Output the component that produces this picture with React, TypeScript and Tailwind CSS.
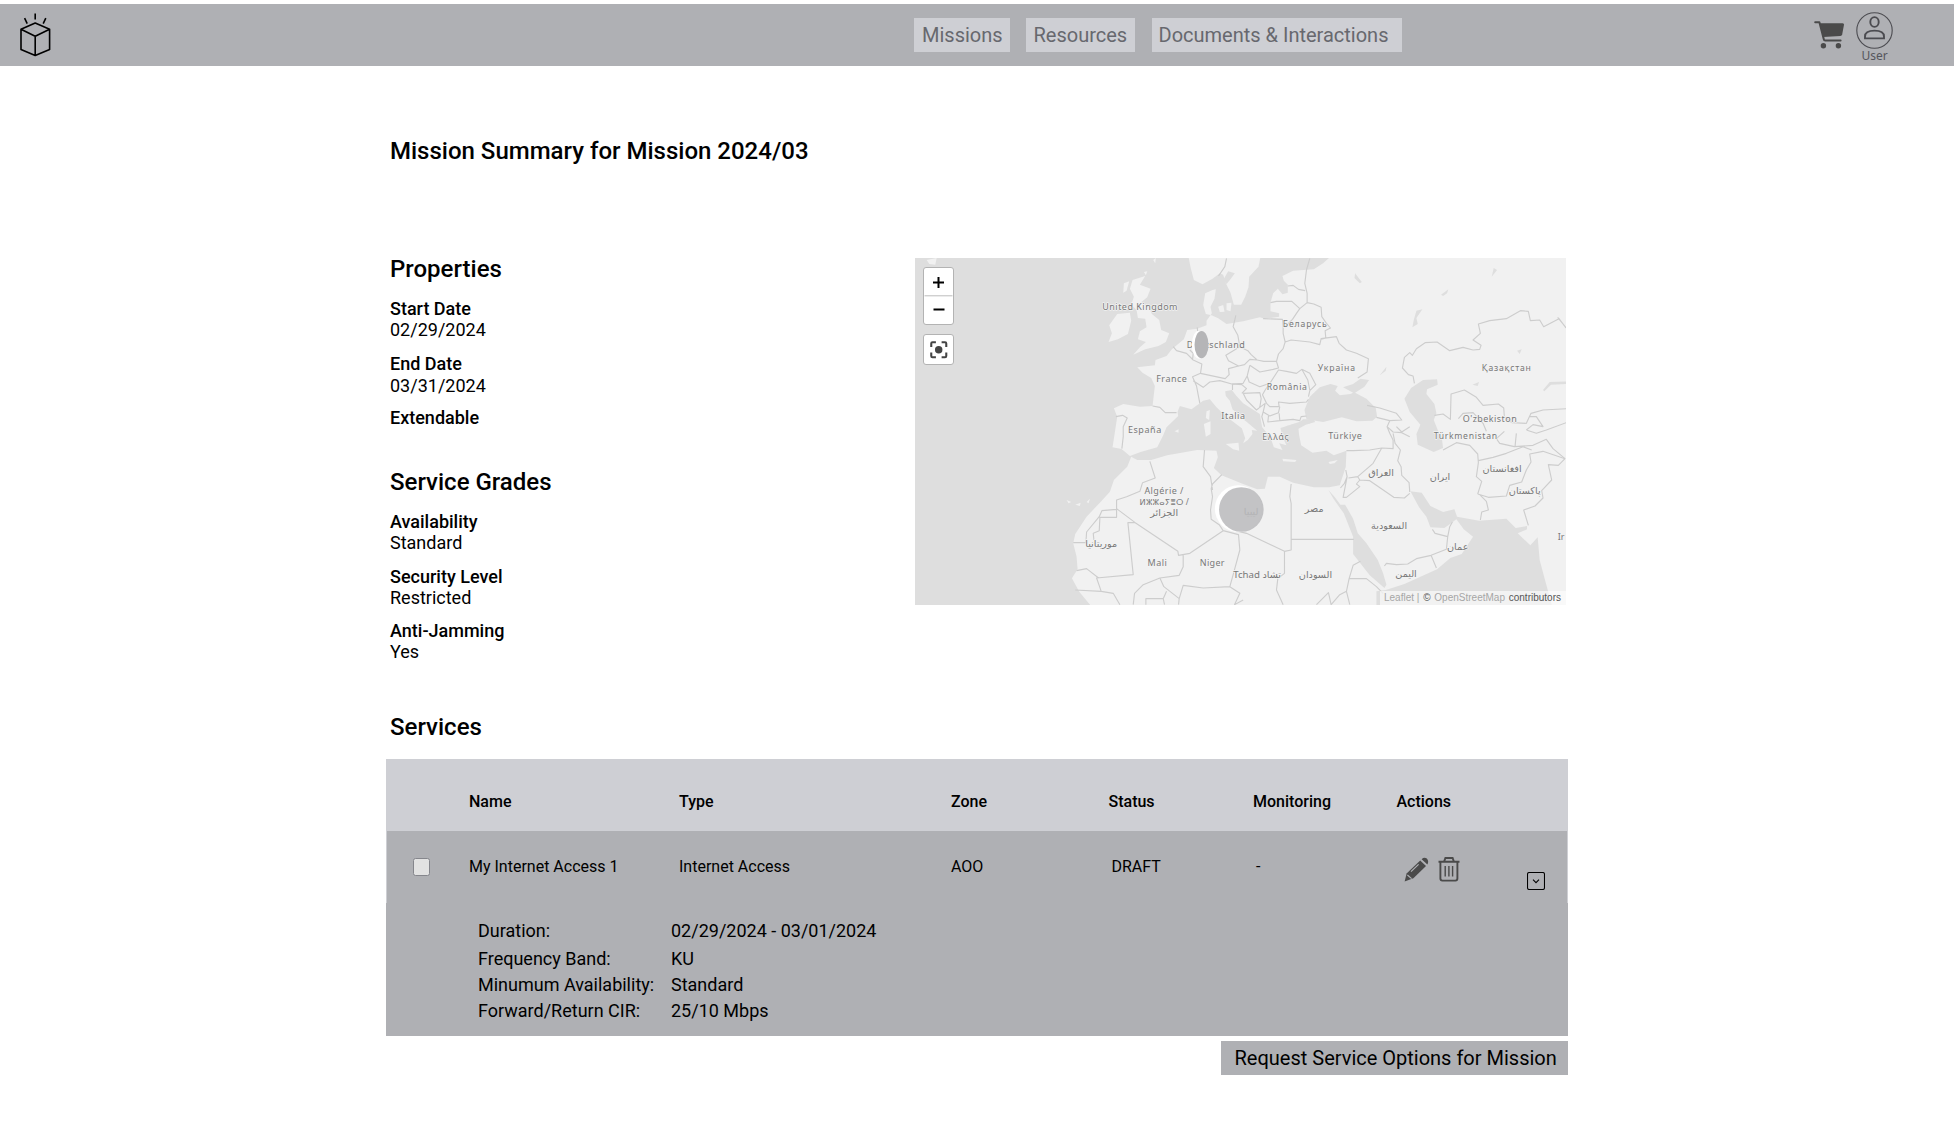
import React from "react";

const NAV = [
  { label: "Missions", cls: "w-[96px] pl-[8px]" },
  { label: "Resources", cls: "w-[109px] pl-[7.5px] ml-[16px]" },
  { label: "Documents & Interactions", cls: "w-[250px] pl-[6.5px] ml-[17px]" },
];

function Logo() {
  return (
    <svg className="ml-[16px] mt-[6px] h-[50px] w-[38px] shrink-0" viewBox="16 10 38 50" fill="none" stroke="#000" strokeWidth="1.6" strokeLinejoin="round">
      <path d="M35.2 23 49.6 29.3V49.4L35.2 55.4 21 49.4V29.3Z M21 29.3 35.2 36.3 49.6 29.3 M35.2 36.3V55.4" />
      <path d="M35.2 13.5V19.5M24.6 18.2 27.2 23.6M45.8 18.2 43.2 23.6" />
    </svg>
  );
}

function Header() {
  return (
    <header className="mt-1 flex h-[62px] bg-[#afb0b4]">
      <Logo />
      <nav className="ml-[860px] mt-[14px] flex h-[34px] text-[20px] leading-[34px] text-[#67686e]">
        {NAV.map((n) => (
          <a key={n.label} className={`h-full whitespace-nowrap bg-[#cecfd4] ${n.cls}`}>{n.label}</a>
        ))}
      </nav>
      <div className="ml-auto mr-[61px] flex">
        <svg className="mr-[11px] mt-[16px] h-[30px] w-[31px]" viewBox="0 0 31 30" fill="#4a4a4a">
          <path d="M1.2 2.2H5.4L9.8 19.3Q10 20.6 11.3 20.6H26.6" fill="none" stroke="#4a4a4a" strokeWidth="2" strokeLinecap="round" strokeLinejoin="round" />
          <path d="M6 3.2H28.6Q30.2 3.2 30 4.8L28.2 14.5Q27.9 15.9 26.4 16L9.2 17Z" />
          <circle cx="9.4" cy="25.8" r="2.7" />
          <circle cx="24.4" cy="25.8" r="2.7" />
        </svg>
        <div className="flex w-[37px] flex-col items-center">
          <svg className="mt-[8px] h-[37px] w-[37px] shrink-0" viewBox="0 0 37 37" fill="none" stroke="#4b4b50">
            <circle cx="18.5" cy="18.5" r="17.7" strokeWidth="1.1" />
            <ellipse cx="18.5" cy="10" rx="4.2" ry="4.9" strokeWidth="1.9" />
            <path d="M9 26.4V24.4Q9 18.6 18.5 18.6T28 24.4V26.4Z" strokeWidth="1.9" />
          </svg>
          <span className="font-['Noto_Sans'] text-[12px] leading-[14px] text-[#55565c]">User</span>
        </div>
      </div>
    </header>
  );
}

function Field({ name, value, cls }: { name: string; value?: string; cls: string }) {
  return (
    <div className={`flex flex-col text-[18px] leading-[21px] ${cls}`}>
      <dt className="font-medium">{name}</dt>
      {value && <dd>{value}</dd>}
    </div>
  );
}

/* Label: text, x centre, baseline, width (0 keeps the natural width), font size */
const LABELS: [string, number, number, number, number][] = [
  ["United Kingdom", 690, 179, 226, 27],
  ["Deutschland", 918, 294, 174, 27],
  ["France", 785, 397, 92, 27],
  ["Беларусь", 1185, 232, 132, 26],
  ["Україна", 1280, 364, 112, 26],
  ["România", 1131, 420, 121, 26],
  ["Italia", 970, 506, 71, 27],
  ["España", 704, 549, 100, 27],
  ["Ελλάς", 1097, 570, 80, 26],
  ["Türkiye", 1306, 567, 101, 27],
  ["Қазақстан", 1790, 363, 147, 26],
  ["O'zbekiston", 1740, 517, 162, 27],
  ["Türkmenistan", 1667, 567, 190, 26],
  ["Algérie /", 762, 733, 117, 27],
  ["ⵍⵣⵣⴰⵢⴻⵔ /", 763, 766, 148, 25],
  ["الجزائر", 763, 798, 0, 29],
  ["موريتانيا", 574, 892, 0, 29],
  ["Mali", 742, 947, 58, 27],
  ["Niger", 907, 948, 74, 27],
  ["Tchad تشاد", 1042, 983, 0, 29],
  ["السودان", 1217, 983, 0, 29],
  ["مصر", 1213, 787, 0, 29],
  ["السعودية", 1438, 836, 0, 29],
  ["العراق", 1414, 678, 0, 29],
  ["ايران", 1591, 691, 0, 29],
  ["ليبيا", 1024, 796, 0, 29],
  ["افغانستان", 1777, 665, 0, 29],
  ["پاکستان", 1845, 731, 0, 29],
  ["عمان", 1644, 899, 0, 29],
  ["اليمن", 1489, 981, 0, 29],
];

const LAND = [
  // Europe, Asia and Africa
  "M1262 20 1240 40 1212 58 1150 62 1118 78 1122 92 1134 104 1134 128 1118 133 1104 116 1090 130 1082 158 1082 184 1108 190 1108 200 1064 206 1050 202 1000 214 950 222 925 205 905 196 888 192 880 165 886 130 908 120 918 118 914 146 902 170 906 190 890 212 890 226 862 236 832 240 822 268 786 298 770 318 737 330 735 346 682 352 698 368 724 384 735 408 728 468 690 470 640 462 612 475 622 500 608 592 635 597 660 618 692 606 742 592 760 556 770 532 805 498 803 486 810 468 845 478 880 452 900 448 920 472 950 500 996 535 1006 565 1000 580 1014 570 1028 552 1026 540 1042 542 1010 515 990 500 968 478 960 452 948 438 946 424 966 420 980 438 1000 460 1050 492 1057 532 1082 562 1092 592 1118 600 1108 580 1130 586 1118 560 1112 534 1138 526 1162 522 1180 508 1212 508 1216 516 1188 524 1166 536 1168 556 1174 586 1208 608 1250 602 1272 616 1310 602 1308 650 1290 706 1258 712 1212 712 1150 698 1110 680 1074 680 1065 716 1042 718 1000 702 935 676 912 654 924 622 920 602 862 600 772 616 724 630 682 630 664 620 652 650 612 690 600 725 572 756 530 800 496 852 490 880 500 920 503 958 486 985 508 1025 545 1070 1975 1070 1975 20Z",
  // Scandinavia
  "M836 20 842 52 852 90 878 103 908 86 930 70 940 74 948 100 962 128 972 164 994 164 1006 140 1016 112 1018 80 1046 50 1052 20Z",
  // Danish isles
  "M925 170 940 165 944 185 930 186Z M950 160 965 158 962 184 950 180Z",
  // Great Britain
  "M668 90 706 78 690 104 722 116 712 142 692 158 716 170 726 192 748 210 754 240 778 250 768 276 746 288 706 298 670 314 690 292 708 276 684 268 690 244 710 232 706 206 684 204 680 180 664 164 672 140 660 116Z",
  // Ireland and northern isles
  "M598 226 622 192 660 188 664 212 654 252 624 268 596 276 606 250Z M642 100 658 94 650 122 640 128Z M702 66 712 64 708 76Z M730 30 738 24 736 40Z M50 30 80 24 76 44 58 42Z",
  // Mediterranean islands
  "M890 484 900 480 898 510 888 504Z M882 522 902 514 902 552 888 560Z M948 582 986 578 988 602 970 598Z M1118 626 1160 630 1156 636 1120 634Z M1256 636 1284 630 1274 640 1260 642Z M794 544 806 538 806 548Z",
  // Atlantic islands
  "M470 750 484 756 476 760Z M496 764 512 758 510 768Z M530 756 540 746 536 760Z",
];

const SEA = [
  // Black Sea and Sea of Azov
  "M1190 508 1184 480 1200 440 1230 412 1262 402 1284 408 1276 422 1290 436 1322 432 1330 428 1300 412 1330 402 1352 386 1378 390 1364 410 1336 428 1370 446 1398 474 1402 500 1388 512 1340 514 1296 502 1240 516Z",
  // Caspian Sea
  "M1484 446 1504 414 1540 390 1582 388 1584 404 1552 418 1550 432 1574 462 1580 490 1572 510 1584 540 1596 560 1600 594 1572 606 1524 584 1520 552 1532 524 1500 486Z",
  // Red Sea
  "M1256 720 1272 748 1302 790 1330 860 1330 912 1380 976 1424 1014 1430 1004 1420 970 1404 930 1370 880 1344 850 1330 806 1306 764 1292 764 1274 740Z",
  // Gulf and Arabian Sea
  "M1502 724 1536 728 1562 768 1600 786 1634 778 1642 800 1708 812 1790 806 1818 834 1852 828 1852 838 1824 850 1862 886 1884 862 1890 930 1906 990 1928 1070 1400 1070 1400 1024 1428 1020 1484 1002 1582 958 1622 924 1656 912 1690 860 1662 838 1640 808 1624 820 1604 834 1562 832 1550 800 1528 772Z",
  // Lakes
  "M1520 182 1538 178 1520 204 1524 222 1508 232 1512 210Z M1336 70 1356 96 1350 100 1334 84Z M1594 134 1616 118 1612 130 1600 138Z M1900 420 1920 396 1975 394 1975 402 1924 404 1904 424Z M1130 528 1200 520 1210 514 1180 512Z M1410 376 1430 350 1428 362Z M1688 404 1708 396 1704 408Z M1822 302 1836 298 1830 312Z M1752 54 1762 60 1746 80Z M940 90 955 64 975 70 962 88 950 102Z",
];

const BORDERS = [
  // Northern and eastern Europe
  "M950 25 945 50 926 78 M1200 25 1190 60 1185 100 1192 130 1192 158 M1134 108 1150 106 1166 118 1186 122 M1082 158 1100 154 1146 154 1170 176 1192 158 1212 162 1234 172 1236 200 1250 220 1262 234 1246 242 1248 264 1232 268 M1170 176 1160 190 1148 208 1128 228 1120 230 1120 250 1126 276 1144 270 1200 276 1230 284 1234 266 1280 260 1288 280 1310 300 1340 310 1376 326 1372 366 1344 384 M1060 206 1118 208 1120 230 M1126 276 1120 296 1106 312 1100 334 M978 196 970 230 984 256 990 290 948 316 956 332 986 348 1004 344 1020 328 1042 330 M990 290 1014 302 1024 314 1042 330 1062 334 1100 334 1106 354 1090 358 1050 366 1020 346",
  // Central and western Europe
  "M862 232 866 262 M790 290 800 302 830 310 850 330 876 342 872 370 848 380 860 408 866 440 870 460 M848 330 850 310 840 300 M728 468 750 472 766 488 800 488 M618 500 638 496 652 504 640 530 640 560 636 596 M872 370 900 376 946 386 958 374 956 356 986 348 M850 392 880 412 900 396 930 392 966 402 1000 400 1012 378 1020 346 M1012 378 1018 396 1050 410 1080 400 1106 360 1130 364 1160 370 1176 358 1200 370 1218 404 1200 422 1196 440 M1176 358 1194 390 1200 420 M1080 400 1066 420 1058 434 1070 460 1080 470 1108 470 1106 456 1140 460 1190 456 1196 448",
  "M968 420 968 402 996 404 1010 416 996 430 M1000 430 1050 428 1054 446 1050 472 1040 480 1010 450 1000 430 M1050 472 1066 460 1060 486 1080 498 1106 488 1110 470 M1060 486 1056 500 1064 530 M1076 498 1074 516 1110 512 1108 490 M1110 512 1150 508 1170 512 1174 500 1190 498",
  // Caucasus and central Asia
  "M1372 466 1410 474 1460 490 1476 510 1440 512 1400 502 M1440 512 1432 530 1450 546 1476 548 1500 560 M1432 530 1440 550 1450 570 M1460 530 1476 546 1500 530 M1514 400 1510 378 1496 374 1478 354 1484 322 1500 308 1508 316 1520 296 1546 278 1582 276 1620 302 1660 292 1690 300 1710 298 1714 286 1690 270 1712 250 1706 222 1740 212 1790 206 1832 182 1856 184 1862 212 1890 210 1902 230 1948 206 1969 234 M1944 202 1975 240",
  "M1574 496 1600 492 1622 508 1624 432 1664 420 1700 442 1720 466 1766 462 1782 474 1784 500 1806 518 M1646 506 1660 490 1690 488 1720 520 1730 544 M1600 600 1640 578 1680 586 1704 612 1706 638 1700 680 1716 694 1704 732 M1784 544 1760 566 1770 580 1814 590 1870 586 1910 568 1930 596 1966 626 M1806 518 1850 520 1864 490 1900 480 1975 476 M1850 540 1870 524 1900 530 1880 500 1860 500 M1850 540 1880 550 1910 540 1975 516 M1820 550 1816 590 M1706 632 1750 622 1790 610 1840 590 1866 600",
  // Middle East
  "M1310 602 1330 602 1380 600 1416 594 1450 596 1450 570 M1416 594 1390 640 1344 680 1316 684 M1344 680 1350 690 1340 702 1350 710 1310 742 1300 742 1312 680 1308 660 M1312 680 1304 700 1292 714 M1350 690 1380 692 1452 742 1484 744 1500 730 M1450 550 1456 580 1472 600 1464 632 1474 650 1476 676 1498 698 1500 726 M1568 838 1576 850 1614 860 1620 830 1628 816 M1614 860 1610 898 1564 916 1580 954 M1564 916 1520 926 1494 942 1460 944 1430 940 1424 948 M1704 732 1736 742 1790 738 1800 706 1836 696 1850 660 1864 636 1860 612 1900 604 1966 626 1946 646 1916 644 1926 690 1896 722 1900 744 1876 768 1842 780 1856 826 M1710 734 1730 754 1736 780 1716 786 1712 810",
  // Africa
  "M720 634 736 684 698 698 690 724 650 740 620 750 620 782 M570 802 568 842 550 850 552 870 M568 802 620 802 620 776 676 818 804 904 806 916 840 910 940 842 928 824 904 808 902 780 908 740 904 716 908 702 936 674 M884 600 880 650 902 680 908 720 M490 878 528 878 530 846 568 800 576 782 620 778 M676 818 654 818 670 974 560 984 574 1024 496 1020 M820 916 820 950 808 976 750 984 700 1004 674 1030 670 1064 M500 962 530 956 566 984 M574 1024 610 1030 630 1064 M750 984 762 1010 808 1046 806 1064 M808 1046 820 1006 880 1014 960 1010 970 974 990 900 986 854 940 842 M708 1064 708 1046 760 1046 770 1024 M760 1046 764 1064 M960 1010 990 1030 974 1064 1000 1050",
  "M1144 702 1140 740 1144 760 1144 868 1332 868 M986 844 1010 850 1124 904 1144 900 1144 868 M1124 904 1124 970 1104 986 1100 1020 1120 1064 M1352 934 1330 946 1318 986 1310 1024 1290 1034 1264 1064 1256 1028 1220 1064 M1318 986 1370 986 1400 1010 1420 1030 M1310 1024 1320 1064",
];

function WorldMap() {
  return (
    <div className="relative h-[347px] w-[651px] overflow-hidden bg-[#dedede]">
      <svg className="block h-full w-full" viewBox="15 24 1954 1041" preserveAspectRatio="none">
        <g fill="#f1f1f1">{LAND.map((d) => <path key={d} d={d} />)}</g>
        <g fill="#dedede">{SEA.map((d) => <path key={d} d={d} />)}</g>
        <g fill="none" stroke="#cdcdcd" strokeWidth="3.4" strokeLinejoin="round">{BORDERS.map((d) => <path key={d} d={d} />)}</g>
        <circle cx="985" cy="776" r="70" fill="#fff" />
        <g fill="#787878" textAnchor="middle" fontFamily="'Noto Sans', 'DejaVu Sans', sans-serif" stroke="#f3f3f3" strokeWidth="4" paintOrder="stroke" strokeLinejoin="round">
          {LABELS.map(([t, x, y, w, s]) => (
            <text key={t} x={x} y={y} fontSize={s} textLength={w || undefined}>{t}</text>
          ))}
          <text x="1944" y="869" fontSize="27" textAnchor="start">Ir</text>
        </g>
        <path d="M867 242A21 42 0 0 0 867 326L885 322 876 246Z" fill="#fff" />
        <ellipse cx="875" cy="284" rx="21" ry="41" fill="#b5b5b7" />
        <circle cx="994.5" cy="778.5" r="67" fill="#bbbbbd" fillOpacity="0.88" />
      </svg>
      <div className="absolute left-[8px] top-[9px] flex w-[31px] flex-col rounded-[3px] border-[1.5px] border-[#b3b3b3] bg-white">
        <svg className="h-[56px] w-full" viewBox="0 0 28 56" fill="none" stroke="#000" strokeWidth="2">
          <path d="M8.5 14.5H19.5M14 9V20M9 41.5H20" />
          <path d="M0 27.8H28" stroke="#bdbdbd" strokeWidth="1" />
        </svg>
      </div>
      <div className="absolute left-[8px] top-[76px] h-[31px] w-[31px] rounded-[3px] border-[1.5px] border-[#b3b3b3] bg-white">
        <svg className="h-full w-full" viewBox="0 0 28 28" fill="none" stroke="#444" strokeWidth="2">
          <path d="M7 11.5V8.2Q7 7 8.2 7H11.5M17 7H20.3Q21.5 7 21.5 8.2V11.5M21.5 17V20.3Q21.5 21.5 20.3 21.5H17M11.5 21.5H8.2Q7 21.5 7 20.3V17" />
          <circle cx="14.2" cy="14.2" r="3.6" fill="#444" stroke="none" />
        </svg>
      </div>
      <div className="absolute bottom-0 right-0 flex h-[14px] w-[186px] items-center justify-between whitespace-nowrap bg-white/60 pl-[4px] pr-[5px] font-['Liberation_Sans'] text-[10px] leading-[14px]">
        <span className="text-[#a6a6a6]">Leaflet |</span>
        <span className="text-[#555]">©</span>
        <span className="text-[#a6a6a6]">OpenStreetMap</span>
        <span className="text-[#555]">contributors</span>
      </div>
    </div>
  );
}

const COLS = "grid grid-cols-[83px_210px_272px_157.5px_144.5px_143.5px_130px_1fr]";

const DETAILS = [
  ["Duration:", "02/29/2024 - 03/01/2024", "h-[28px]"],
  ["Frequency Band:", "KU", "h-[26px]"],
  ["Minumum Availability:", "Standard", "h-[26px]"],
  ["Forward/Return CIR:", "25/10 Mbps", "h-[26px]"],
];

function ServicesTable() {
  return (
    <section className="mt-[18px] w-[1182px]">
      <div className={`${COLS} h-[72px] bg-[#cecfd4] pt-[31px] text-[16px] font-medium leading-[24px]`}>
        <span />
        <span>Name</span>
        <span>Type</span>
        <span>Zone</span>
        <span>Status</span>
        <span>Monitoring</span>
        <span>Actions</span>
      </div>
      <div className="border-x border-[#cecfd4] bg-[#afb0b4]">
        <div className={`${COLS} -mx-px h-[72px] pt-[24px] text-[16px] leading-[24px]`}>
          <span className="ml-[27px] mt-[3px] h-[18px] w-[17px] rounded-[2.5px] border border-[#85868c] bg-[#e2e2e2]" />
          <span>My Internet Access 1</span>
          <span>Internet Access</span>
          <span>AOO</span>
          <span className="pl-[3px]">DRAFT</span>
          <span className="pl-[3px]">-</span>
          <span className="flex pl-[7px] pt-[2px]">
            <svg className="h-[25px] w-[25px]" viewBox="0 0 25 25" fill="#4a4a4a">
              <path d="M16.2 3.6 22 8.9 9.4 21.2 0.6 24.4 2.6 16.4Z" />
              <path d="M17.6 2.2Q20.2-.4 22.8 1.6 25.2 4.2 23.4 7.4Z" />
              <path d="M16.4 2.4 23.2 8.4" stroke="#afb0b4" strokeWidth="0.9" />
              <path d="M7 14.6 14.6 7.4M3.4 18 7.6 21.6" fill="none" stroke="#afb0b4" strokeWidth="1.2" />
            </svg>
            <svg className="ml-[9px] h-[25px] w-[22px]" viewBox="0 0 22 25" fill="none" stroke="#4a4a4a">
              <path d="M0.5 4.8H21.5M6 4.8 7.4 1H14.6L16 4.8" strokeWidth="1.9" />
              <path d="M2.4 5V21.6Q2.4 23.6 4.4 23.6H17.4Q19.4 23.6 19.4 21.6V5" strokeWidth="1.9" />
              <path d="M7.2 9V19.5M10.9 9V19.5M14.6 9V19.5" strokeWidth="1.4" />
            </svg>
          </span>
          <span className="pt-[17px]">
            <svg className="h-[18px] w-[18px]" viewBox="0 0 18 18" fill="none" stroke="#000">
              <rect x="0.5" y="0.5" width="17" height="17" rx="1.8" strokeWidth="1.1" />
              <path d="M6 7.6 9 10.6 12 7.6" strokeWidth="1.1" />
            </svg>
          </span>
        </div>
      </div>
      <dl className="h-[133px] bg-[#afb0b4] pl-[92px] pt-[14px] text-[18px] leading-[28px]">
        {DETAILS.map(([k, v, h]) => (
          <div key={k} className={`flex ${h}`}>
            <dt className="w-[193px]">{k}</dt>
            <dd>{v}</dd>
          </div>
        ))}
      </dl>
      <div className="mt-[5px] flex justify-end">
        <button className="h-[34px] w-[347px] whitespace-nowrap bg-[#afb0b4] pl-[13.5px] text-left text-[20px] leading-[34px]">Request Service Options for Mission</button>
      </div>
    </section>
  );
}

export default function App() {
  return (
    <div className="flex h-[1147px] w-[1954px] flex-col overflow-hidden bg-white font-['Roboto',sans-serif] text-black">
      <Header />
      <main className="ml-[386px] w-[1182px]">
        <h1 className="ml-[4px] mt-[71px] text-[24px] font-medium leading-[28px]">Mission Summary for Mission 2024/03</h1>
        <div className="mt-[93px] flex h-[455px] justify-between">
          <dl className="ml-[4px] mt-[-3px]">
            <h2 className="text-[24px] font-medium leading-[28px]">Properties</h2>
            <Field name="Start Date" value="02/29/2024" cls="mt-[15px]" />
            <Field name="End Date" value="03/31/2024" cls="mt-[13px] gap-px" />
            <Field name="Extendable" cls="mt-[11px]" />
            <h2 className="mt-[40px] text-[24px] font-medium leading-[28px]">Service Grades</h2>
            <Field name="Availability" value="Standard" cls="mt-[15px]" />
            <Field name="Security Level" value="Restricted" cls="mt-[13px]" />
            <Field name="Anti-Jamming" value="Yes" cls="mt-[12px]" />
          </dl>
          <div className="mr-[2px]">
            <WorldMap />
          </div>
        </div>
        <h2 className="ml-[4px] text-[24px] font-medium leading-[28px]">Services</h2>
        <ServicesTable />
      </main>
    </div>
  );
}
